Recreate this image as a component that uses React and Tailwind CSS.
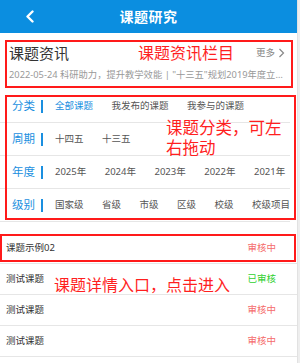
const rows = [
  { label: "分类", items: ["全部课题", "我发布的课题", "我参与的课题"], active: 0 },
  { label: "周期", items: ["十四五", "十三五"] },
  { label: "年度", items: ["2025年", "2024年", "2023年", "2022年", "2021年"] },
  { label: "级别", items: ["国家级", "省级", "市级", "区级", "校级", "校级项目"] },
]

const topics = [
  { name: "课题示例02", status: "审核中", ok: false },
  { name: "测试课题", status: "已审核", ok: true },
  { name: "测试课题", status: "审核中", ok: false },
  { name: "测试课题", status: "审核中", ok: false },
]

const App = () => {
  return (
    <div className="flex w-[300px] h-[363px] overflow-hidden bg-white" style={{ fontFamily: '"Noto Sans", "Noto Sans CJK SC", sans-serif' }}>
      <div className="w-[297px] flex flex-col">

        {/* header */}
        <div className="relative h-[33px] bg-[#0b8ee0] flex items-center justify-center shrink-0">
          <svg className="absolute left-[25px] top-[10px]" width="10" height="13" viewBox="0 0 10 13">
            <path d="M7.5 1.5 L2.5 6.5 L7.5 11.5" stroke="white" strokeWidth="2.4" fill="none" strokeLinecap="round" strokeLinejoin="round" />
          </svg>
          <p className="text-white text-[14px] font-bold leading-none tracking-[0.5px]">课题研究</p>
        </div>

        {/* news */}
        <div className="relative h-[57px] shrink-0 pl-[9px] pr-[12px] pt-[9px]">
          <div className="flex items-center h-[22px]">
            <p className="text-[15px] text-[#333] leading-none">课题资讯</p>
            <div className="ml-auto flex items-center gap-[3px] text-[#888]">
              <span className="text-[9.5px] leading-none">更多</span>
              <svg width="7" height="10" viewBox="0 0 7 10">
                <path d="M1.5 1 L5.5 5 L1.5 9" stroke="#888" strokeWidth="1.2" fill="none" />
              </svg>
            </div>
          </div>
          <p className="mt-[3px] text-[9.3px] leading-[16px] text-[#999] truncate w-[276px]">
            2022-05-24 科研助力，提升教学效能 | "十三五"规划2019年度立项课题结题公示
          </p>
          <div className="absolute left-[5px] top-[7px] w-[288px] h-[48px] border-2 border-[#ff1a1a] pointer-events-none"></div>
          <p className="absolute left-[138px] top-[10px] text-[16px] leading-[20px] text-[#ff1f1f]">课题资讯栏目</p>
        </div>

        {/* filters */}
        <div className="relative shrink-0">
          {rows.map((row, i) => (
            <div key={i} className="flex items-center h-[33px] border-b border-[#e6e6e6] mr-[7px] overflow-hidden">
              <p className="ml-[12px] shrink-0 whitespace-nowrap text-[11.5px] leading-none text-[#1a8fe0] w-[29px]">{row.label}</p>
              <div className="shrink-0 w-[2px] h-[13px] bg-[#1a8fe0]"></div>
              <div className="flex gap-[18.5px] ml-[12px] whitespace-nowrap">
                {row.items.map((it, j) => (
                  <span key={j} className={`shrink-0 text-[9.5px] leading-none ${row.active === j ? "text-[#1a8fe0]" : "text-[#555]"}`}>{it}</span>
                ))}
              </div>
            </div>
          ))}
          <div className="absolute left-[5px] top-[5px] w-[291px] h-[125px] border-2 border-[#ff1a1a] pointer-events-none"></div>
          <p className="absolute left-[166px] top-[28px] w-[120px] text-[16.5px] leading-[20px] text-[#ff1f1f]">课题分类，可左右拖动</p>
        </div>

        {/* list */}
        <div className="relative mt-[11px]">
          {topics.map((t, i) => (
            <div key={i} className="flex items-center h-[31px] border-b border-[#e6e6e6] pl-[6px] pr-[21px]">
              <p className="text-[9.5px] leading-none text-[#333]">{t.name}</p>
              <p className={`ml-auto text-[9.5px] leading-none ${t.ok ? "text-[#2fd02f]" : "text-[#f56c6c]"}`}>{t.status}</p>
            </div>
          ))}
          <div className="absolute left-0 top-[1px] w-[296px] h-[28px] border-2 border-[#ff1a1a] pointer-events-none"></div>
          <p className="absolute left-[54px] top-[42px] text-[16px] leading-[20px] text-[#ff1f1f]">课题详情入口，点击进入</p>
        </div>

      </div>
      <div className="w-[3px] bg-[#eeeeee] border-l border-[#e2e2e2]"></div>
    </div>
  )
}

export default App
